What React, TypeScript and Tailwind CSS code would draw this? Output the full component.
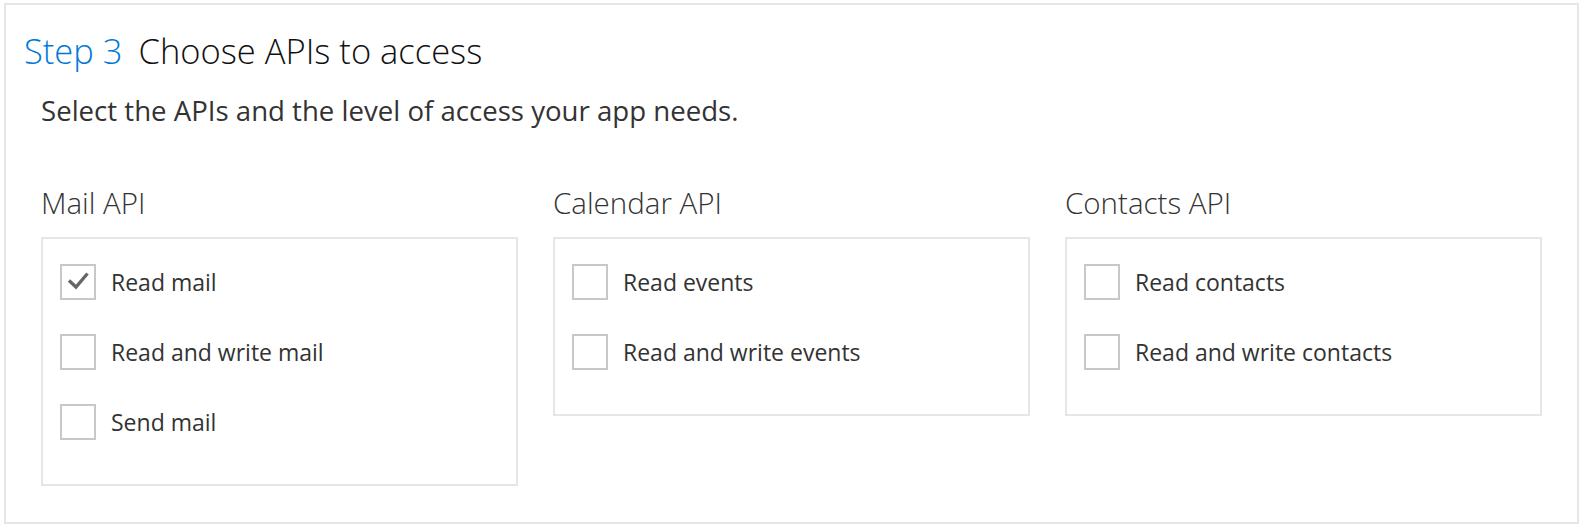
import React from 'react';

const font = { fontFamily: '"Open Sans", "Noto Sans", Arial, sans-serif' };

type Api = { title: string; items: { label: string; checked?: boolean }[] };

const apis: Api[] = [
  {
    title: 'Mail API',
    items: [{ label: 'Read mail', checked: true }, { label: 'Read and write mail' }, { label: 'Send mail' }],
  },
  {
    title: 'Calendar API',
    items: [{ label: 'Read events' }, { label: 'Read and write events' }],
  },
  {
    title: 'Contacts API',
    items: [{ label: 'Read contacts' }, { label: 'Read and write contacts' }],
  },
];

const Checkbox: React.FC<{ checked?: boolean }> = ({ checked }) => (
  <div className="flex h-[36px] w-[36px] flex-shrink-0 items-center justify-center border-2 border-[#c8c8c8] bg-white">
    {checked && (
      <svg width="32" height="32" viewBox="0 0 32 32" fill="none">
        <path d="M7 14.5 L14 21 L25.5 7.5" stroke="#666666" strokeWidth="3.3" />
      </svg>
    )}
  </div>
);

const App: React.FC = () => {
  return (
    <div className="h-[528px] w-[1582px] bg-white pl-[4px] pt-[3px]" style={font}>
      <div className="h-[521px] w-[1575px] border-2 border-[#e6e6e6]">
        {/* Header */}
        <h1 className="ml-[18px] mt-[22px] flex items-baseline text-[34.5px] font-light leading-[48px] text-[#111]">
          <span className="text-[#0078d7]">Step 3</span>
          <span className="ml-[16px]">Choose APIs to access</span>
        </h1>
        <p className="ml-[35px] mt-[17px] text-[27.6px] leading-[36px] text-[#333]">
          Select the APIs and the level of access your app needs.
        </p>

        {/* API columns */}
        <div className="ml-[35px] mt-[57px] flex items-start gap-[35px]">
          {apis.map(api => (
            <div key={api.title} className="w-[477px]">
              <h2 className="text-[29.5px] font-light leading-[36px] text-[#333]">{api.title}</h2>
              <div className="mt-[16px] flex flex-col gap-[34px] border-2 border-[#e6e6e6] pb-[44px] pl-[17px] pt-[25px]">
                {api.items.map(item => (
                  <label key={item.label} className="flex items-center gap-[15px]">
                    <Checkbox checked={item.checked} />
                    <span className="text-[23px] leading-[32px] text-[#333]">{item.label}</span>
                  </label>
                ))}
              </div>
            </div>
          ))}
        </div>
      </div>
    </div>
  );
};

export default App;
